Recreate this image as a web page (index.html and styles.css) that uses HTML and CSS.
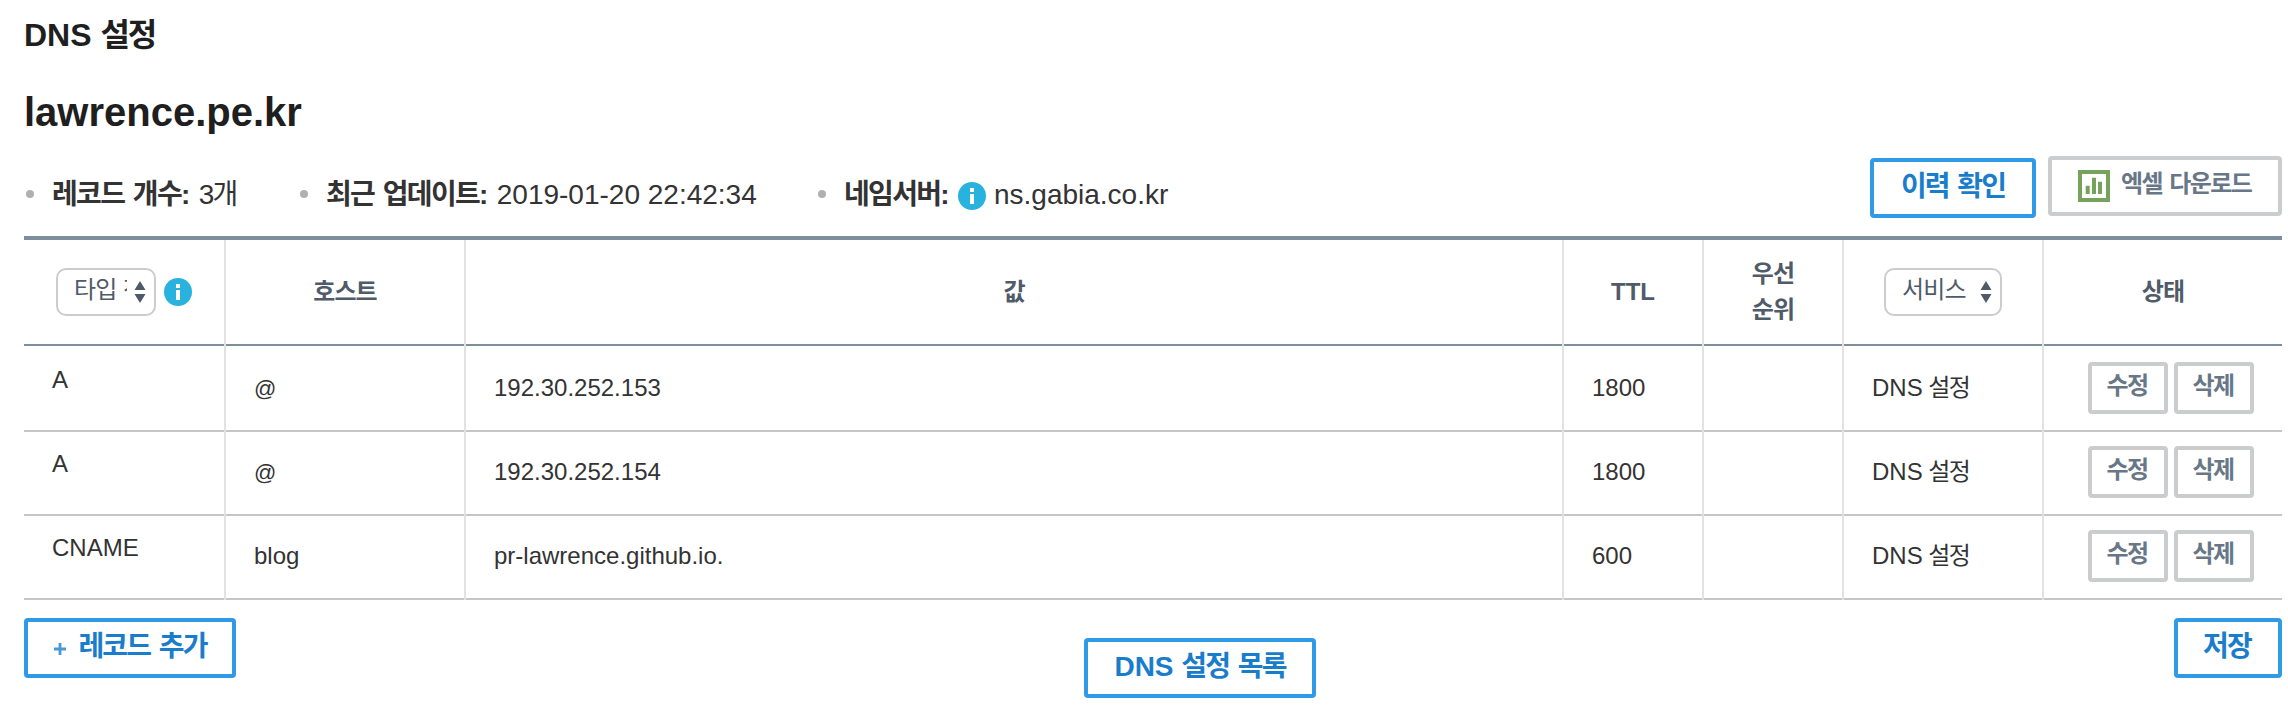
FILE: index.html
```html
<!DOCTYPE html>
<html lang="ko">
<head>
<meta charset="utf-8">
<title>DNS 설정</title>
<link rel="stylesheet" href="styles.css">
</head>
<body>
<svg class="defs" width="0" height="0">
  <symbol id="info" viewBox="0 0 28 28"><circle cx="14" cy="14" r="14" fill="#29b2de"/><path d="M12 6h4v4h-4zM12 12h4v10h-4z" fill="#fff"/></symbol>
  <symbol id="sort" viewBox="0 0 12 22"><path d="M6 0l5.5 9H.5zM6 22L.5 13h11z" fill="#505b69"/></symbol>
</svg>
<main class="page">
  <h1 class="title"><span class="latin">DNS </span>설정</h1>
  <h2 class="domain">lawrence.pe.kr</h2>
  <div class="toolbar">
    <ul class="summary">
      <li class="count"><b>레코드 개수:</b><span>3개</span></li>
      <li class="updated"><b>최근 업데이트:</b><span class="latin">2019-01-20 22:42:34</span></li>
      <li><b>네임서버:</b><svg class="info-icon"><use href="#info"/></svg><span class="latin">ns.gabia.co.kr</span></li>
    </ul>
    <div class="actions">
      <button class="btn btn-history">이력 확인</button>
      <button class="btn btn-gray btn-excel">
        <svg class="excel-icon" viewBox="0 0 32 32"><path d="M0 0h32v32H0zM4 4v24h24V4z" fill="#76a35b" fill-rule="evenodd"/><path d="M7.7 15.7h4V24h-4zM14 7.7h4V24h-4zM20 11.7h4V24h-4z" fill="#76a35b"/></svg>
        <span>엑셀 다운로드</span>
      </button>
    </div>
  </div>
  <section class="records">
    <div class="row head">
      <div class="cell filter"><span class="select select-type"><span class="value">타입 전체</span><svg class="sort"><use href="#sort"/></svg></span><svg class="info-icon"><use href="#info"/></svg></div>
      <div class="cell">호스트</div>
      <div class="cell">값</div>
      <div class="cell latin">TTL</div>
      <div class="cell">우선<br>순위</div>
      <div class="cell"><span class="select select-service"><span class="value">서비스</span><svg class="sort"><use href="#sort"/></svg></span></div>
      <div class="cell">상태</div>
    </div>
    <div class="row first">
      <div class="cell type latin">A</div>
      <div class="cell latin"><span class="at">@</span></div>
      <div class="cell latin">192.30.252.153</div>
      <div class="cell latin">1800</div>
      <div class="cell"></div>
      <div class="cell service"><span class="latin">DNS </span>설정</div>
      <div class="cell controls"><button class="btn btn-gray btn-small">수정</button><button class="btn btn-gray btn-small">삭제</button></div>
    </div>
    <div class="row">
      <div class="cell type latin">A</div>
      <div class="cell latin"><span class="at">@</span></div>
      <div class="cell latin">192.30.252.154</div>
      <div class="cell latin">1800</div>
      <div class="cell"></div>
      <div class="cell service"><span class="latin">DNS </span>설정</div>
      <div class="cell controls"><button class="btn btn-gray btn-small">수정</button><button class="btn btn-gray btn-small">삭제</button></div>
    </div>
    <div class="row">
      <div class="cell type latin">CNAME</div>
      <div class="cell latin">blog</div>
      <div class="cell latin">pr-lawrence.github.io.</div>
      <div class="cell latin">600</div>
      <div class="cell"></div>
      <div class="cell service"><span class="latin">DNS </span>설정</div>
      <div class="cell controls"><button class="btn btn-gray btn-small">수정</button><button class="btn btn-gray btn-small">삭제</button></div>
    </div>
  </section>
  <footer class="footer">
    <button class="btn btn-add"><svg class="plus" viewBox="0 0 14 14"><path d="M7 1v12M1 7h12" stroke="#4a98d5" stroke-width="2.8"/></svg><span>레코드 추가</span></button>
    <button class="btn btn-list"><span class="latin">DNS </span>설정 목록</button>
    <button class="btn btn-save">저장</button>
  </footer>
</main>
</body>
</html>
```
FILE: styles.css
```css
* { box-sizing: border-box; }
body {
  margin: 0;
  background: #fff;
  color: #333;
  font-family: "Liberation Sans", "Noto Sans CJK KR", sans-serif;
  letter-spacing: -0.055em;
  word-spacing: 0.055em;
}
.defs { position: absolute; }
.latin { letter-spacing: 0; word-spacing: 0; white-space: pre; }
.page { width: 2282px; height: 716px; padding: 17px 0 0 24px; }
.title { margin: 0; font-size: 32px; line-height: 36px; color: #1f1f1f; letter-spacing: -0.07em; }
.domain { margin: 35px 0 0; font-size: 40px; line-height: 48px; color: #1f1f1f; letter-spacing: 0; }

.toolbar { display: flex; justify-content: space-between; align-items: flex-start; height: 80px; margin-top: 20px; }
.summary { display: flex; margin: 0; padding: 21px 0 0; list-style: none; font-size: 28px; line-height: 36px; letter-spacing: -0.06em; word-spacing: 0.09em; }
.summary li { display: flex; white-space: pre; }
.summary li b { margin-right: 10px; }
.summary li::before { content: ""; width: 8px; height: 8px; margin: 13px 18px 0 2px; border-radius: 50%; background: #b0b0b0; }
.summary .count { width: 274px; }
.summary .updated { width: 518px; }
.summary .latin { letter-spacing: 0; word-spacing: 0; }
.info-icon { width: 28px; height: 28px; flex: none; }
.summary .info-icon { margin: 5px 8px 0 0; }

.actions { display: flex; gap: 12px; }
.btn {
  display: flex;
  justify-content: center;
  align-items: flex-start;
  height: 60px;
  margin: 0;
  padding: 7px 0 0;
  border: 4px solid #2f9be6;
  border-radius: 4px;
  background: #fff;
  color: #1a7dcb;
  font-family: inherit;
  font-size: 28px;
  font-weight: 700;
  line-height: 36px;
  letter-spacing: -0.065em;
  word-spacing: 0.09em;
  white-space: nowrap;
}
.btn-history { width: 166px; margin-top: 2px; }
.btn-gray { border-color: #cbccce; color: #687787; font-size: 24px; }
.btn-excel { width: 234px; justify-content: flex-start; padding: 6px 0 0 26px; gap: 11px; }
.excel-icon { width: 32px; height: 32px; margin-top: 4px; }

.records { border-top: 4px solid #7d8f9f; font-size: 24px; line-height: 36px; }
.row { display: grid; grid-template-columns: 202px 240px 1098px 140px 140px 200px 238px; height: 84px; }
.cell { padding: 22px 26px 0 28px; border-right: 2px solid #e2e2e2; box-shadow: inset 0 -2px #c6c6c6; }
.cell:last-child { border-right: 0; }
.type { padding-top: 14px; }
.first { height: 86px; }
.first .cell { padding-top: 24px; }
.first .type { padding-top: 16px; }
.head { height: 106px; font-weight: 700; color: #505b69; }
.head .cell { display: flex; align-items: center; justify-content: center; padding: 0 0 2px; box-shadow: inset 0 -2px #7d8f9f; text-align: center; }
.head .filter { gap: 8px; }
.select { display: flex; justify-content: space-between; height: 48px; padding: 0 8px 0 16px; border: 2px solid #ccc; border-radius: 10px; font-weight: 400; }
.select-type { width: 100px; }
.select-service { width: 118px; }
.value { line-height: 40px; overflow: hidden; white-space: nowrap; text-align: left; }
.select-type .value { width: 53px; }
.sort { width: 12px; height: 22px; margin-top: 11px; flex: none; }
.at { font-size: 22px; line-height: 34px; }
.service { letter-spacing: -0.07em; }
.service .latin { margin-right: -1px; }

.row .controls { display: flex; gap: 6px; padding: 14px 0 0 44px; }
.first .controls { padding-top: 16px; }
.btn-small { width: 80px; height: 52px; padding: 2px 2px 0 0; }

.footer { display: flex; align-items: flex-start; padding-top: 18px; }
.btn-add { width: 212px; gap: 11px; }
.plus { width: 14px; height: 14px; margin-top: 13px; }
.btn-list { width: 232px; margin: 20px auto 0 848px; }
.btn-save { width: 108px; padding-right: 2px; }
```
